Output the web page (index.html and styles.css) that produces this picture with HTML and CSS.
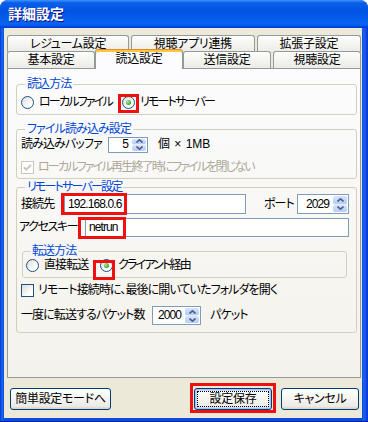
FILE: index.html
```html
<!DOCTYPE html>
<html lang="ja">

<head>
    <meta charset="UTF-8">
    <meta name="viewport" content="width=device-width, initial-scale=1.0">
    <title>詳細設定</title>
    <link rel="stylesheet" href="styles.css">
</head>

<body>
    <div class="window">
        <div class="titlebar">詳細設定</div>

        <div class="client">
            <div class="tab-row back">
                <div class="tab">レジューム設定</div>
                <div class="tab">視聴アプリ連携</div>
                <div class="tab">拡張子設定</div>
            </div>
            <div class="tab-row front">
                <div class="tab">基本設定</div>
                <div class="tab active">読込設定</div>
                <div class="tab">送信設定</div>
                <div class="tab">視聴設定</div>
            </div>

            <div class="panel">
                <!-- 読込方法 -->
                <fieldset class="group group-method">
                    <legend>読込方法</legend>
                    <div class="row">
                        <label class="radio radio-local"><span class="radio-dot"></span><span class="tight">ローカルファイル</span></label>
                        <label class="radio"><span class="radio-dot checked"></span><span class="tight">リモートサーバー</span></label>
                    </div>
                </fieldset>

                <!-- ファイル読み込み設定 -->
                <fieldset class="group group-file">
                    <legend>ファイル読み込み設定</legend>
                    <div class="row row-buffer">
                        <span class="label label-buffer">読み込みバッファ</span>
                        <div class="spin spin-buffer">
                            <span class="val">5</span>
                            <span class="spin-btns">
                                <span class="spin-up"><svg width="7" height="4" viewBox="0 0 7 4"><path d="M0.5 3.5 L3.5 0.8 L6.5 3.5" fill="none" stroke="#4d6185" stroke-width="1.6"/></svg></span>
                                <span class="spin-down"><svg width="7" height="4" viewBox="0 0 7 4"><path d="M0.5 0.5 L3.5 3.2 L6.5 0.5" fill="none" stroke="#4d6185" stroke-width="1.6"/></svg></span>
                            </span>
                        </div>
                        <span class="unit">個 × 1MB</span>
                    </div>
                    <div class="row row-check">
                        <label class="checkbox disabled">
                            <span class="check"><svg width="11" height="11" viewBox="0 0 11 11"><path d="M2 5.2 L4.3 7.6 L9 2.8" fill="none" stroke="#cac8bb" stroke-width="2"/></svg></span><span class="tight">ローカルファイル再生終了時にファイルを閉じない</span>
                        </label>
                    </div>
                </fieldset>

                <!-- リモートサーバー設定 -->
                <fieldset class="group group-remote">
                    <legend class="tight">リモートサーバー設定</legend>
                    <div class="row row-host">
                        <span class="label label-host">接続先</span>
                        <div class="field">192.168.0.6</div>
                        <span class="label label-port">ポート</span>
                        <div class="spin spin-port">
                            <span class="val">2029</span>
                            <span class="spin-btns">
                                <span class="spin-up"><svg width="7" height="4" viewBox="0 0 7 4"><path d="M0.5 3.5 L3.5 0.8 L6.5 3.5" fill="none" stroke="#4d6185" stroke-width="1.6"/></svg></span>
                                <span class="spin-down"><svg width="7" height="4" viewBox="0 0 7 4"><path d="M0.5 0.5 L3.5 3.2 L6.5 0.5" fill="none" stroke="#4d6185" stroke-width="1.6"/></svg></span>
                            </span>
                        </div>
                    </div>
                    <div class="row row-key">
                        <span class="label label-key">アクセスキー</span>
                        <div class="field">netrun</div>
                    </div>

                    <fieldset class="group group-transfer">
                        <legend>転送方法</legend>
                        <div class="row">
                            <label class="radio radio-direct"><span class="radio-dot"></span>直接転送</label>
                            <label class="radio"><span class="radio-dot checked"></span><span class="tight">クライアント経由</span></label>
                        </div>
                    </fieldset>

                    <div class="row row-check row-folder">
                        <label class="checkbox">
                            <span class="check"></span>リモート接続時に、最後に開いていたフォルダを開く
                        </label>
                    </div>

                    <div class="row row-packet">
                        <span class="label label-packet">一度に転送するパケット数</span>
                        <div class="spin spin-packet">
                            <span class="val">2000</span>
                            <span class="spin-btns">
                                <span class="spin-up"><svg width="7" height="4" viewBox="0 0 7 4"><path d="M0.5 3.5 L3.5 0.8 L6.5 3.5" fill="none" stroke="#4d6185" stroke-width="1.6"/></svg></span>
                                <span class="spin-down"><svg width="7" height="4" viewBox="0 0 7 4"><path d="M0.5 0.5 L3.5 3.2 L6.5 0.5" fill="none" stroke="#4d6185" stroke-width="1.6"/></svg></span>
                            </span>
                        </div>
                        <span class="unit-packet">パケット</span>
                    </div>
                </fieldset>
            </div>

            <div class="footer">
                <button class="btn btn-simple">簡単設定モードへ</button>
                <button class="btn btn-save">設定保存</button>
                <button class="btn btn-cancel">キャンセル</button>
            </div>
        </div>

        <!-- 赤枠の注釈 -->
        <span class="mark mark-remote"></span>
        <span class="mark mark-host"></span>
        <span class="mark mark-key"></span>
        <span class="mark mark-client"></span>
        <span class="mark mark-save"></span>
    </div>
</body>

</html>
```

FILE: styles.css
```css
/* ウィンドウ全体 */
* {
    box-sizing: border-box;
    margin: 0;
    padding: 0;
}

body {
    width: 368px;
    height: 422px;
    overflow: hidden;
    background: #fff;
    color: #000;
    font-family: "Liberation Sans", "Noto Sans CJK JP", sans-serif;
    font-size: 12px;
    line-height: 13px;
    letter-spacing: -0.9px;
    font-feature-settings: "palt";
}

.tight {
    letter-spacing: -1.8px;
}

.window {
    position: relative;
    width: 368px;
    height: 422px;
    display: flex;
    flex-direction: column;
    background: linear-gradient(to right, #0831d9, #166aee 2px, #0a4ee0 4px, #0a4ee0 362px, #1e63ea 364px, #0831d9);
    border-radius: 8px 8px 0 0;
    border-bottom: 1px solid #001ea0;
}

.titlebar {
    height: 28px;
    padding-left: 8px;
    line-height: 28px;
    color: #fff;
    font-size: 14px;
    font-weight: bold;
    letter-spacing: 0;
    text-shadow: 1px 1px #0f1089;
    background: linear-gradient(180deg, #3d95ff, #0a5ee8 10%, #0054e3 40%, #0a62f0 85%, #0058ea 93%, #003dd7 96%, #003dd7);
    border-radius: 8px 8px 0 0;
}

.client {
    flex: 1;
    margin: 0 6px 3px 4px;
    padding: 7px 1px 0 3px;
    background: #ece9d8;
    display: flex;
    flex-direction: column;
}

/* タブ */
.tab-row {
    display: flex;
    gap: 2px;
}

.tab-row.back {
    height: 16px;
}

.tab-row.front {
    height: 17px;
}

.tab {
    flex: 1 1 auto;
    text-align: center;
    white-space: nowrap;
    padding-top: 1px;
    line-height: 14px;
    letter-spacing: -0.3px;
    border: 1px solid #919b9c;
    border-bottom: 0;
    border-radius: 3px 3px 0 0;
    background: linear-gradient(#fff, #f7f7f4 30%, #ecebe6);
}

.tab-row.back .tab {
    height: 17px;
}

.tab.active {
    position: relative;
    z-index: 1;
    margin: -2px -2px -1px;
    padding-top: 2px;
    line-height: 15px;
    border-top-color: #e68b2c;
    box-shadow: inset 0 2px #ffc83c;
    background: #fcfcfe;
}

.panel {
    height: 310px;
    padding: 9px 3px 0 8px;
    border: 1px solid #919b9c;
    background: linear-gradient(#fcfcfe, #f6f5f0 70%, #f3f2ec);
}

/* グループボックス */
.group {
    min-width: 0;
    border: 1px solid #d0d0bf;
    border-radius: 3px;
    padding: 0 7px 5px 4px;
}

.group legend {
    margin-left: 4px;
    padding: 0 2px;
    color: #0046d5;
    line-height: 13px;
}

.row {
    display: flex;
    align-items: center;
    white-space: nowrap;
}

.group-method .row {
    height: 13px;
    margin-top: 5px;
}

.group-file {
    margin-top: 8px;
    padding-bottom: 4px;
}

.row-buffer {
    height: 17px;
}

.group-file .row-check {
    margin-top: 8px;
}

.row-check {
    height: 13px;
}

.group-remote {
    margin-top: 2px;
    padding-bottom: 7px;
}

.row-host {
    height: 20px;
}

.row-key {
    height: 19px;
    margin-top: 4px;
}

.group-transfer {
    margin: 8px 2px 0 1px;
    padding: 0 4px 5px 3px;
}

.group-transfer .row {
    height: 13px;
    margin-top: 1px;
}

.row-folder {
    margin-top: 6px;
}

.row-packet {
    height: 19px;
    margin-top: 9px;
}

/* ラベル */
.label {
    flex: none;
}

.label-buffer {
    width: 87px;
}

.label-host {
    width: 43px;
}

.label-port {
    width: 33px;
    margin-left: 18px;
}

.label-key {
    width: 66px;
    margin-left: -2px;
    letter-spacing: -1.4px;
}

.label-packet {
    width: 131px;
}

.unit {
    margin-left: 10px;
    letter-spacing: 0;
    word-spacing: 1px;
}

.unit-packet {
    margin-left: 9px;
}

/* ラジオボタン */
.radio {
    display: flex;
    align-items: center;
    gap: 5px;
}

.radio-local {
    flex: none;
    width: 101px;
}

.radio-direct {
    flex: none;
    width: 74px;
}

.radio-dot {
    position: relative;
    flex: none;
    width: 13px;
    height: 13px;
    border: 1px solid #1c5180;
    border-radius: 50%;
    background: linear-gradient(135deg, #dcdcd7, #fff 75%);
}

.radio-dot.checked::after {
    content: "";
    position: absolute;
    left: 3px;
    top: 3px;
    width: 5px;
    height: 5px;
    border-radius: 50%;
    background: radial-gradient(circle at 35% 35%, #a8eca4, #21a121 80%);
}

/* チェックボックス */
.checkbox {
    display: flex;
    align-items: center;
    gap: 4px;
}

.check {
    flex: none;
    display: flex;
    width: 13px;
    height: 13px;
    border: 1px solid #1c5180;
    background: linear-gradient(135deg, #dcdcd7, #fff 75%);
}

.checkbox.disabled {
    color: #aca899;
}

.checkbox.disabled .check {
    border-color: #cac8bb;
    background: #fff;
}

/* 入力欄 */
.field {
    flex: 1;
    height: 100%;
    padding: 0 3px;
    line-height: 17px;
    border: 1px solid #7f9db9;
    background: #fff;
}

.row-host .field {
    line-height: 18px;
}

.spin {
    flex: none;
    display: flex;
    height: 100%;
    border: 1px solid #7f9db9;
    background: #fff;
}

.spin .val {
    flex: 1;
    text-align: right;
    padding-right: 3px;
    align-self: center;
}

.spin-buffer {
    width: 40px;
    height: 16px;
}

.spin-port {
    width: 52px;
}

.spin-packet {
    width: 49px;
}

.spin-btns {
    display: flex;
    flex-direction: column;
    width: 14px;
    margin: 1px;
}

.spin-up,
.spin-down {
    flex: 1;
    display: flex;
    align-items: center;
    justify-content: center;
    border-radius: 2px;
    background: linear-gradient(#d6e3fd, #b6cbf6);
}

.spin-up {
    border-bottom: 1px solid #e6eefc;
}

/* 下部ボタン */
.footer {
    display: flex;
    gap: 9px;
    padding: 10px 2px 0 3px;
}

.btn {
    height: 22px;
    font: inherit;
    letter-spacing: -0.3px;
    font-feature-settings: "palt";
    color: #000;
    border: 1px solid #003c74;
    border-radius: 3px;
    background: linear-gradient(#fff, #f4f4f0 50%, #ecebe6 86%, #d6d0c5);
}

.btn-simple {
    width: 101px;
}

.btn-save {
    width: 78px;
    margin-left: auto;
    box-shadow: inset 0 0 0 1px #a6c0f2, inset 0 0 0 2px #cddbf7;
    outline: 1px dotted #000;
    outline-offset: -4px;
}

.btn-cancel {
    width: 78px;
}

/* 赤枠 */
.mark {
    position: absolute;
    border: 3px solid #ee1111;
}

.mark-remote {
    left: 118px;
    top: 94px;
    width: 21px;
    height: 19px;
}

.mark-host {
    left: 61px;
    top: 193px;
    width: 66px;
    height: 22px;
}

.mark-key {
    left: 78px;
    top: 217px;
    width: 48px;
    height: 22px;
}

.mark-client {
    left: 93px;
    top: 260px;
    width: 22px;
    height: 20px;
}

.mark-save {
    left: 190px;
    top: 383px;
    width: 86px;
    height: 30px;
}
```
